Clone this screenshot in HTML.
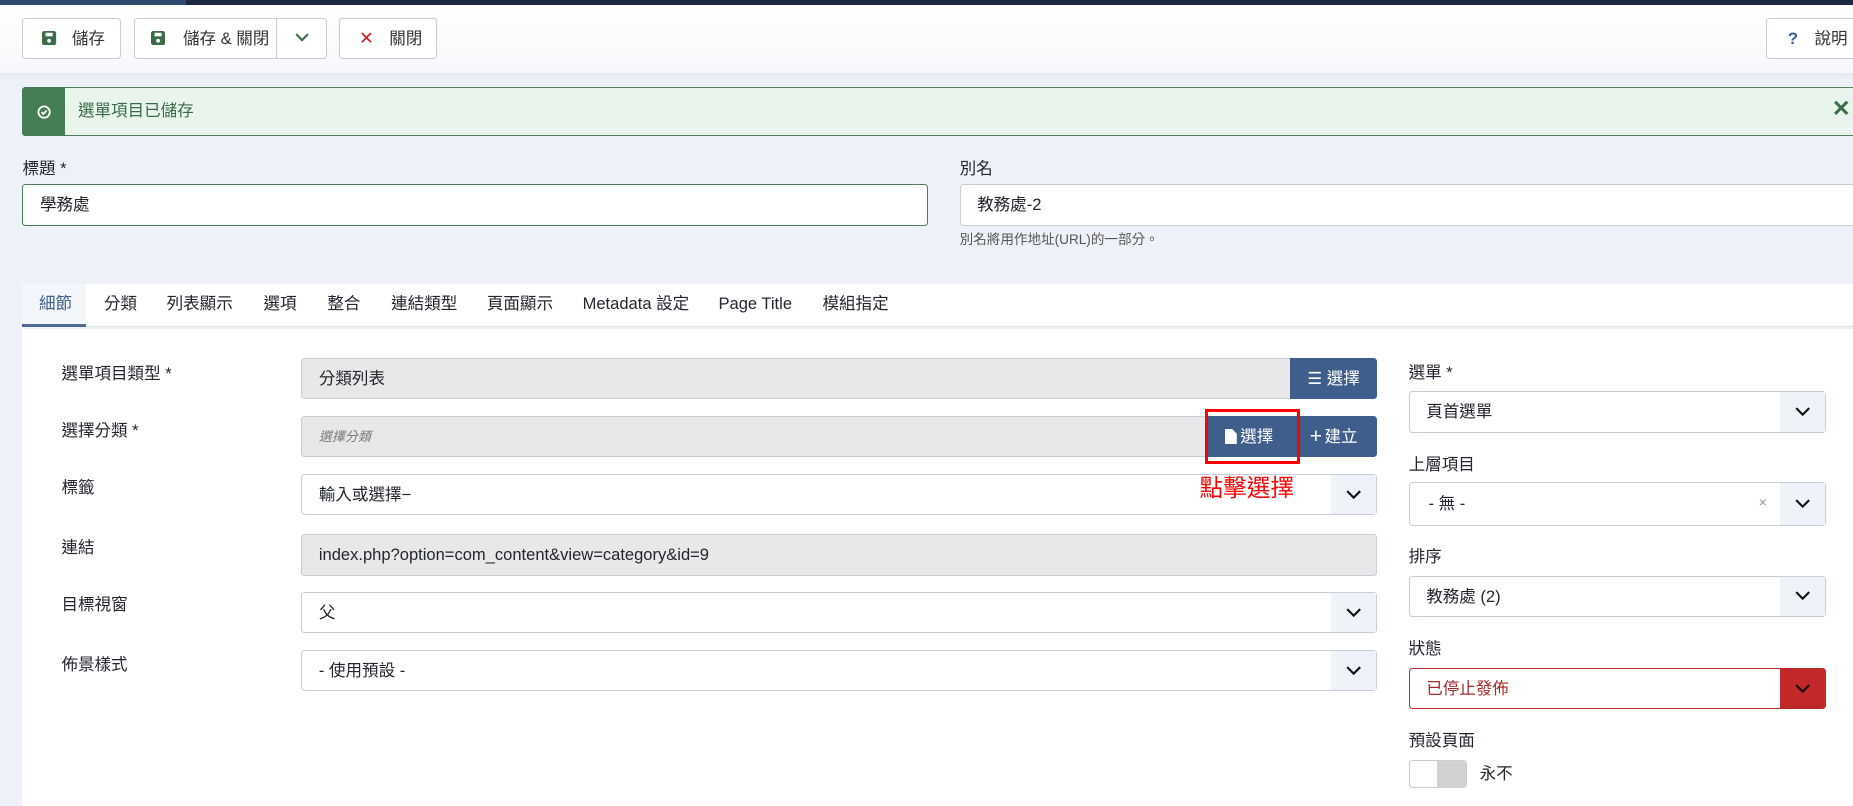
<!DOCTYPE html>
<html><head><meta charset="utf-8"><style>
*{box-sizing:border-box;margin:0;padding:0}
html,body{width:1853px;height:806px;overflow:hidden}
body{background:#eef2f8;font-family:"Liberation Sans","Noto Sans CJK TC",sans-serif;color:#22262e;line-height:18px}
#w{zoom:1.18176;width:1568px;height:682px;position:relative;overflow:hidden}
.a{position:absolute}
.top{left:0;top:0;width:1568px;height:4px;background:#1c2940}
.top i{position:absolute;left:0;top:0;width:157px;height:4px;background:#2f4a6f}
.tb{left:0;top:4px;width:1568px;height:58px;background:linear-gradient(#fff,#f6f8fb);box-shadow:0 2px 6px rgba(0,0,0,.06)}
.btn{position:absolute;top:15px;height:35px;border:1px solid #c8ccd4;border-radius:3px;background:#fff;font-size:14px;color:#333;display:flex;align-items:center}
.lbl{position:absolute;font-size:14px;color:#22262e;height:18px}
.inp{position:absolute;height:35px;border:1px solid #c9ced6;border-radius:3px;background:#fff;font-size:14px;display:flex;align-items:center;padding-left:14px;color:#22262e}
.gr{background:#e8e8e8}
.car{position:absolute;right:0;top:0;width:38px;height:100%;background:#eef2f9;display:flex;align-items:center;justify-content:center}
.bb{position:absolute;background:#3f5e8c;color:#fff;font-size:14px;display:flex;align-items:center;justify-content:center;height:35px}
.tab{position:absolute;top:248px;font-size:14px;color:#22262e;height:18px}
</style></head><body><div id="w">
<div class="a top"><i></i></div>
<div class="a tb">
 <div class="btn" style="left:19px;top:11px;width:83px"><svg style="margin-left:16px" width="12" height="12" viewBox="0 0 12 12"><rect x="0" y="0" width="12" height="12" rx="2" fill="#3b6d48"/><rect x="3" y="1.5" width="6" height="3" fill="#fff"/><circle cx="6" cy="8.3" r="1.6" fill="#fff"/></svg><span style="margin-left:13px">儲存</span></div>
 <div class="btn" style="left:113px;top:11px;width:164px"><svg style="margin-left:14px" width="12" height="12" viewBox="0 0 12 12"><rect x="0" y="0" width="12" height="12" rx="2" fill="#3b6d48"/><rect x="3" y="1.5" width="6" height="3" fill="#fff"/><circle cx="6" cy="8.3" r="1.6" fill="#fff"/></svg><span style="margin-left:15px">儲存 &amp; 關閉</span><span style="position:absolute;left:120px;top:0;height:33px;border-left:1px solid #c8ccd4;width:42px;display:flex;align-items:center;justify-content:center"><svg width="12" height="8" viewBox="0 0 12 8"><path d="M1 1l5 5 5-5" stroke="#3b6d48" stroke-width="1.8" fill="none"/></svg></span></div>
 <div class="btn" style="left:287px;top:11px;width:83px"><span style="margin-left:16px;color:#c0262a;font-size:15px">✕</span><span style="margin-left:13px">關閉</span></div>
 <div class="btn" style="left:1494px;top:11px;width:90px"><span style="margin-left:18px;color:#2d5f9a;font-weight:bold">?</span><span style="margin-left:14px">說明</span></div>
</div>
<div class="a" style="left:19px;top:74px;width:1560px;height:41px;background:#e9f4ec;border:1px solid #4d7d58;border-radius:3px"></div>
<div class="a" style="left:19px;top:74px;width:36px;height:41px;background:#457d54;border-radius:3px 0 0 3px;display:flex;align-items:center;justify-content:center"><svg width="12" height="12" viewBox="0 0 12 12"><circle cx="6" cy="6" r="4.8" stroke="#fff" stroke-width="1.5" fill="none"/><path d="M3.8 6l1.6 1.6 2.8-3" stroke="#fff" stroke-width="1.5" fill="none"/></svg></div>
<div class="lbl" style="left:66px;top:85px;color:#3a6b48">選單項目已儲存</div>
<div class="lbl" style="left:1550px;top:83px;color:#3b6d48;font-size:19px;font-weight:bold">✕</div>
<div class="lbl" style="left:19px;top:134px">標題 *</div>
<div class="inp" style="left:19px;top:156px;width:766px;border-color:#4d7d58">學務處</div>
<div class="lbl" style="left:812px;top:134px">別名</div>
<div class="inp" style="left:812px;top:156px;width:770px">教務處-2</div>
<div class="lbl" style="left:812px;top:194px;font-size:11.5px;color:#555">別名將用作地址(URL)的一部分。</div>
<div class="a" style="left:19px;top:240px;width:1560px;height:37px;background:#fff;border-bottom:1px solid #dfe3ea"></div>
<div class="a" style="left:19px;top:240px;width:54px;height:37px;background:#f3f6fb;border-bottom:3px solid #506b92"></div>
<div class="tab" style="left:33px;color:#3f5e8c">細節</div>
<div class="tab" style="left:88px">分類</div>
<div class="tab" style="left:141px">列表顯示</div>
<div class="tab" style="left:223px">選項</div>
<div class="tab" style="left:277px">整合</div>
<div class="tab" style="left:331px">連結類型</div>
<div class="tab" style="left:412px">頁面顯示</div>
<div class="tab" style="left:493px">Metadata 設定</div>
<div class="tab" style="left:608px">Page Title</div>
<div class="tab" style="left:696px">模組指定</div>
<div class="a" style="left:19px;top:278px;width:1560px;height:410px;background:#fff"></div>
<div class="lbl" style="left:52px;top:307px">選單項目類型 *</div>
<div class="lbl" style="left:52px;top:355px">選擇分類 *</div>
<div class="lbl" style="left:52px;top:404px">標籤</div>
<div class="lbl" style="left:52px;top:454px">連結</div>
<div class="lbl" style="left:52px;top:503px">目標視窗</div>
<div class="lbl" style="left:52px;top:553px">佈景樣式</div>
<div class="inp gr" style="left:255px;top:303px;width:910px">分類列表</div>
<div class="bb" style="left:1092px;top:303px;width:73px;border-radius:0 3px 3px 0">☰&nbsp;選擇</div>
<div class="inp gr" style="left:255px;top:352px;width:910px;font-size:11px;font-style:italic;color:#777">選擇分類</div>
<div class="bb" style="left:1022px;top:352px;width:70px"><svg width="10" height="13" viewBox="0 0 10 13" style="margin-right:3px"><path d="M0 0h6l4 4v9H0z" fill="#fff"/></svg>選擇</div>
<div class="bb" style="left:1092px;top:352px;width:73px;border-radius:0 3px 3px 0"><span style="font-size:18px;margin-right:2px">+</span>建立</div>
<div class="a" style="left:1020px;top:346px;width:80px;height:47px;border:3px solid #f00"></div>
<div class="inp" style="left:255px;top:401px;width:910px">輸入或選擇−<div class="car"><svg width="13" height="8" viewBox="0 0 13 8"><path d="M1 1l5.5 5.5L12 1" stroke="#111" stroke-width="1.8" fill="none"/></svg></div></div>
<div class="lbl" style="left:1015px;top:402px;color:#f00;font-size:20px;height:24px;line-height:24px">點擊選擇</div>
<div class="inp gr" style="left:255px;top:452px;width:910px">index.php?option=com_content&amp;view=category&amp;id=9</div>
<div class="inp" style="left:255px;top:501px;width:910px">父<div class="car"><svg width="13" height="8" viewBox="0 0 13 8"><path d="M1 1l5.5 5.5L12 1" stroke="#111" stroke-width="1.8" fill="none"/></svg></div></div>
<div class="inp" style="left:255px;top:550px;width:910px">- 使用預設 -<div class="car"><svg width="13" height="8" viewBox="0 0 13 8"><path d="M1 1l5.5 5.5L12 1" stroke="#111" stroke-width="1.8" fill="none"/></svg></div></div>
<div class="lbl" style="left:1192px;top:306px">選單 *</div>
<div class="inp" style="left:1192px;top:331px;width:353px;padding-left:14px">頁首選單<div class="car"><svg width="13" height="8" viewBox="0 0 13 8"><path d="M1 1l5.5 5.5L12 1" stroke="#111" stroke-width="1.8" fill="none"/></svg></div></div>
<div class="lbl" style="left:1192px;top:384px">上層項目</div>
<div class="inp" style="left:1192px;top:408px;width:353px;height:37px;padding-left:16px">- 無 -<span style="position:absolute;right:49px;color:#999;font-size:12px">×</span><div class="car"><svg width="13" height="8" viewBox="0 0 13 8"><path d="M1 1l5.5 5.5L12 1" stroke="#111" stroke-width="1.8" fill="none"/></svg></div></div>
<div class="lbl" style="left:1192px;top:462px">排序</div>
<div class="inp" style="left:1192px;top:487px;width:353px">教務處 (2)<div class="car"><svg width="13" height="8" viewBox="0 0 13 8"><path d="M1 1l5.5 5.5L12 1" stroke="#111" stroke-width="1.8" fill="none"/></svg></div></div>
<div class="lbl" style="left:1192px;top:540px">狀態</div>
<div class="inp" style="left:1192px;top:565px;width:353px;border-color:#b8282c;color:#a52a2a">已停止發佈<div class="car" style="background:#c2282a"><svg width="13" height="8" viewBox="0 0 13 8"><path d="M1 1l5.5 5.5L12 1" stroke="#111" stroke-width="1.8" fill="none"/></svg></div></div>
<div class="lbl" style="left:1192px;top:618px">預設頁面</div>
<div class="a" style="left:1192px;top:643px;width:49px;height:24px;border:1px solid #c9ced6;border-radius:3px;background:#fff;overflow:hidden"><div style="position:absolute;left:23px;top:0;width:26px;height:24px;background:#d2d2d2"></div></div>
<div class="lbl" style="left:1252px;top:646px">永不</div>
</div></body></html>
